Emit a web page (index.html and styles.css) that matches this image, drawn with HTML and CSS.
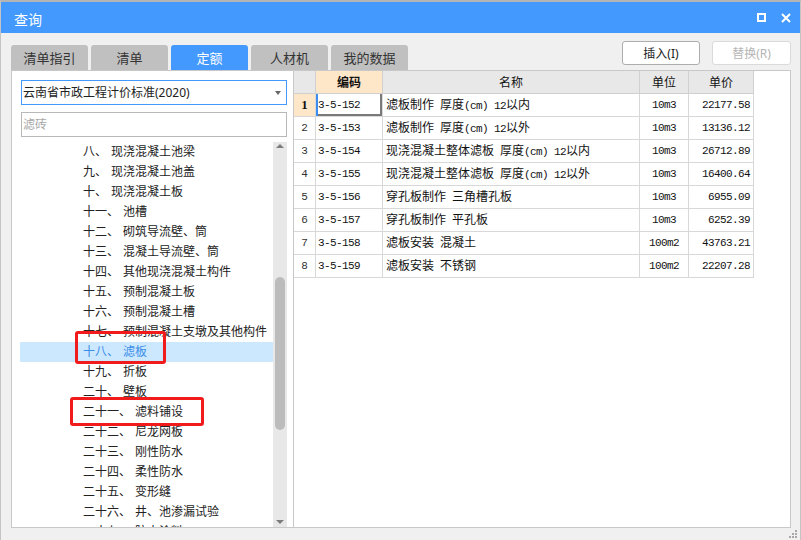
FILE: index.html
```html
<!DOCTYPE html>
<html lang="zh-CN">
<head>
<meta charset="utf-8">
<title>查询</title>
<link rel="stylesheet" href="styles.css">
</head>
<body>
<div class="window">
  <div class="titlebar">
    <span class="title">查询</span>
    <span class="win-btns">
      <svg class="ico" width="9" height="9" viewBox="0 0 9 9"><rect x="1" y="1" width="7" height="7" fill="none" stroke="#fff" stroke-width="2"/></svg>
      <svg class="ico" width="10" height="10" viewBox="0 0 10 10"><path d="M1 1L9 9M9 1L1 9" stroke="#fff" stroke-width="2"/></svg>
    </span>
  </div>

  <div class="toolbar">
    <div class="tabs">
      <div class="tab">清单指引</div>
      <div class="tab">清单</div>
      <div class="tab active">定额</div>
      <div class="tab">人材机</div>
      <div class="tab">我的数据</div>
    </div>
    <div class="actions">
      <button class="btn">插入(I)</button>
      <button class="btn disabled">替换(R)</button>
    </div>
  </div>

  <div class="main">
    <div class="left">
      <div class="select">云南省市政工程计价标准(2020)<span class="caret"></span></div>
      <div class="filter">滤砖</div>
      <div class="tree-wrap">
        <ul class="tree">
          <li><span class="n">八、</span>现浇混凝土池梁</li>
          <li><span class="n">九、</span>现浇混凝土池盖</li>
          <li><span class="n">十、</span>现浇混凝土板</li>
          <li><span class="n">十一、</span>池槽</li>
          <li><span class="n">十二、</span>砌筑导流壁、筒</li>
          <li><span class="n">十三、</span>混凝土导流壁、筒</li>
          <li><span class="n">十四、</span>其他现浇混凝土构件</li>
          <li><span class="n">十五、</span>预制混凝土板</li>
          <li><span class="n">十六、</span>预制混凝土槽</li>
          <li><span class="n">十七、</span>预制混凝土支墩及其他构件</li>
          <li class="sel"><span class="n">十八、</span>滤板</li>
          <li><span class="n">十九、</span>折板</li>
          <li><span class="n">二十、</span>壁板</li>
          <li><span class="n">二十一、</span>滤料铺设</li>
          <li><span class="n">二十二、</span>尼龙网板</li>
          <li><span class="n">二十三、</span>刚性防水</li>
          <li><span class="n">二十四、</span>柔性防水</li>
          <li><span class="n">二十五、</span>变形缝</li>
          <li><span class="n">二十六、</span>井、池渗漏试验</li>
          <li><span class="n">二十七、</span>防水涂料</li>
        </ul>
        <div class="scrollbar">
          <span class="arr up"></span>
          <span class="thumb"></span>
          <span class="arr down"></span>
        </div>
      </div>
    </div>

    <div class="right">
      <div class="grid">
        <div class="c h"></div>
        <div class="c h cur"><b>编码</b></div>
        <div class="c h">名称</div>
        <div class="c h">单位</div>
        <div class="c h">单价</div>

        <div class="c rn cur-row">1</div>
        <div class="c code focus">3-5-152</div>
        <div class="c name">滤板制作<span class="lat">&nbsp;</span>厚度<span class="lat">(cm) 12</span>以内</div>
        <div class="c unit">10m3</div>
        <div class="c price">22177.58</div>

        <div class="c rn">2</div>
        <div class="c code">3-5-153</div>
        <div class="c name">滤板制作<span class="lat">&nbsp;</span>厚度<span class="lat">(cm) 12</span>以外</div>
        <div class="c unit">10m3</div>
        <div class="c price">13136.12</div>

        <div class="c rn">3</div>
        <div class="c code">3-5-154</div>
        <div class="c name">现浇混凝土整体滤板<span class="lat">&nbsp;</span>厚度<span class="lat">(cm) 12</span>以内</div>
        <div class="c unit">10m3</div>
        <div class="c price">26712.89</div>

        <div class="c rn">4</div>
        <div class="c code">3-5-155</div>
        <div class="c name">现浇混凝土整体滤板<span class="lat">&nbsp;</span>厚度<span class="lat">(cm) 12</span>以外</div>
        <div class="c unit">10m3</div>
        <div class="c price">16400.64</div>

        <div class="c rn">5</div>
        <div class="c code">3-5-156</div>
        <div class="c name">穿孔板制作<span class="lat">&nbsp;</span>三角槽孔板</div>
        <div class="c unit">10m3</div>
        <div class="c price">6955.09</div>

        <div class="c rn">6</div>
        <div class="c code">3-5-157</div>
        <div class="c name">穿孔板制作<span class="lat">&nbsp;</span>平孔板</div>
        <div class="c unit">10m3</div>
        <div class="c price">6252.39</div>

        <div class="c rn">7</div>
        <div class="c code">3-5-158</div>
        <div class="c name">滤板安装<span class="lat">&nbsp;</span>混凝土</div>
        <div class="c unit">100m2</div>
        <div class="c price">43763.21</div>

        <div class="c rn">8</div>
        <div class="c code">3-5-159</div>
        <div class="c name">滤板安装<span class="lat">&nbsp;</span>不锈钢</div>
        <div class="c unit">100m2</div>
        <div class="c price">22207.28</div>
      </div>
    </div>
  </div>

  <div class="mark mark1"></div>
  <div class="mark mark2"></div>

  <svg class="grip" width="9" height="9" viewBox="0 0 9 9">
    <rect x="7" y="1" width="2" height="2" fill="#a8a8a8"/>
    <rect x="4" y="4" width="2" height="2" fill="#a8a8a8"/>
    <rect x="7" y="4" width="2" height="2" fill="#a8a8a8"/>
    <rect x="1" y="7" width="2" height="2" fill="#a8a8a8"/>
    <rect x="4" y="7" width="2" height="2" fill="#a8a8a8"/>
    <rect x="7" y="7" width="2" height="2" fill="#a8a8a8"/>
  </svg>
</div>
</body>
</html>
```

FILE: styles.css
```css
* { box-sizing: border-box; margin: 0; padding: 0; }
html, body { width: 801px; height: 540px; overflow: hidden; }
body {
  font-family: "Noto Sans", "Noto Sans CJK SC", sans-serif;
  font-size: 12px;
  color: #222;
  background: #f0f0f0;
}

.window {
  position: relative;
  width: 801px;
  height: 540px;
  background: #f0f0f0;
  border-top: 2px solid #b4b4b4;
  border-left: 1px solid #c4c4c4;
  border-right: 1px solid #c4c4c4;
  display: flex;
  flex-direction: column;
}

/* title bar */
.titlebar {
  height: 31px;
  flex: none;
  background: #4499ff;
  color: #fff;
  display: flex;
  align-items: center;
  justify-content: space-between;
  padding: 0 9px 0 13px;
}
.title { font-size: 14px; padding-top: 2px; }
.win-btns { display: flex; align-items: center; gap: 15px; }
.ico { display: block; }

/* toolbar with tabs and buttons */
.toolbar {
  height: 37px;
  flex: none;
  display: flex;
  justify-content: space-between;
  align-items: flex-start;
  padding: 8px 9px 0 10px;
}
.tabs { display: flex; gap: 3px; margin-top: 4px; }
.tab {
  width: 77px;
  height: 25px;
  background: #c0c0c0;
  border-radius: 3px 3px 0 0;
  display: flex;
  align-items: center;
  justify-content: center;
  font-size: 13px;
  color: #333;
}
.tab.active { background: #4499ff; color: #fff; }

.actions { display: flex; gap: 12px; }
.btn {
  width: 78px;
  height: 24px;
  border: 1px solid #adadad;
  border-radius: 3px;
  background: #fff;
  font-family: inherit;
  font-size: 12px;
  color: #222;
}
.btn.disabled { width: 79px; border-color: #dadada; color: #b5b5b5; }

/* main split */
.main {
  height: 458px;
  flex: none;
  display: flex;
  padding: 0 9px 0 10px;
}
.left {
  width: 282px;
  flex: none;
  background: #fff;
  border: 1px solid #c8c8c8;
  border-right: none;
  padding: 9px 6px 0 9px;
  display: flex;
  flex-direction: column;
}
.select {
  position: relative;
  height: 25px;
  border: 1px solid #4499ff;
  padding-left: 1px;
  line-height: 23px;
  color: #222;
  flex: none;
}
.caret {
  position: absolute;
  right: 5px;
  top: 10px;
  width: 0;
  height: 0;
  border-left: 3.5px solid transparent;
  border-right: 3.5px solid transparent;
  border-top: 4px solid #666;
}
.filter {
  height: 25px;
  margin-top: 7px;
  border: 1px solid #b8b8b8;
  padding-left: 1px;
  line-height: 23px;
  color: #a8a8a8;
  flex: none;
}
.tree-wrap {
  flex: 1;
  min-height: 0;
  margin: 5px 0 0 -1px;
  display: flex;
  overflow: hidden;
}
.tree {
  list-style: none;
  width: 253px;
  flex: none;
  overflow: hidden;
}
.tree li {
  height: 20px;
  line-height: 20px;
  padding-left: 63px;
  white-space: nowrap;
  color: #222;
}
.tree li .n { margin-right: 4px; }
.tree li.sel { background: #cce8ff; color: #3b8de6; }

.scrollbar {
  width: 14px;
  flex: none;
  background: #e8e8e8;
  display: flex;
  flex-direction: column;
  align-items: center;
  padding: 2px 0 3px;
}
.arr { width: 0; height: 0; border-left: 4px solid transparent; border-right: 4px solid transparent; }
.arr.up { border-bottom: 4px solid #7c7c7c; }
.arr.down { border-top: 4px solid #7c7c7c; margin-top: auto; }
.thumb {
  width: 10px;
  height: 153px;
  margin-top: 129px;
  border-radius: 5px;
  background: #bcbcbc;
}

/* right grid */
.right {
  flex: 1;
  background: #fff;
  border: 1px solid #c8c8c8;
}
.grid {
  display: grid;
  grid-template-columns: 22px 67px 257px 49px 65px;
  grid-auto-rows: 23px;
  width: 460px;
}
.c {
  border-right: 1px solid #d8d8d8;
  border-bottom: 1px solid #d8d8d8;
  display: flex;
  align-items: center;
  white-space: nowrap;
  overflow: hidden;
  color: #111;
}
.h {
  background: #e8e8e8;
  justify-content: center;
  border-color: #d0d0d0;
  font-size: 12px;
}
.h.cur { background: #fee6c8; }
.h b { font-weight: 700; }
.rn {
  justify-content: center;
  font-family: "Liberation Mono", monospace;
  font-size: 11px;
  color: #333;
}
.rn.cur-row {
  background: #fee6c8;
  font-family: "Liberation Serif", serif;
  font-weight: 700;
  font-size: 13px;
  color: #111;
}
.code, .unit, .price, .lat {
  font-family: "Liberation Mono", monospace;
  font-size: 11px;
  letter-spacing: -0.6px;
}
.code { padding-left: 2px; }
.focus { box-shadow: inset 2px 0 0 #3d8df0, inset -2px -2px 0 #7a7a7a; }
.name { display: block; line-height: 22px; padding-left: 3px; font-size: 12px; }
.unit { justify-content: center; }
.price { justify-content: flex-end; padding-right: 3px; }

/* red annotation boxes */
.mark {
  position: absolute;
  border: 3px solid #f21b1b;
  border-radius: 3px;
}
.mark1 { left: 74px; top: 329px; width: 91px; height: 33px; }
.mark2 { left: 69px; top: 395px; width: 134px; height: 29px; }

.grip { position: absolute; right: 3px; bottom: 2px; }
```
